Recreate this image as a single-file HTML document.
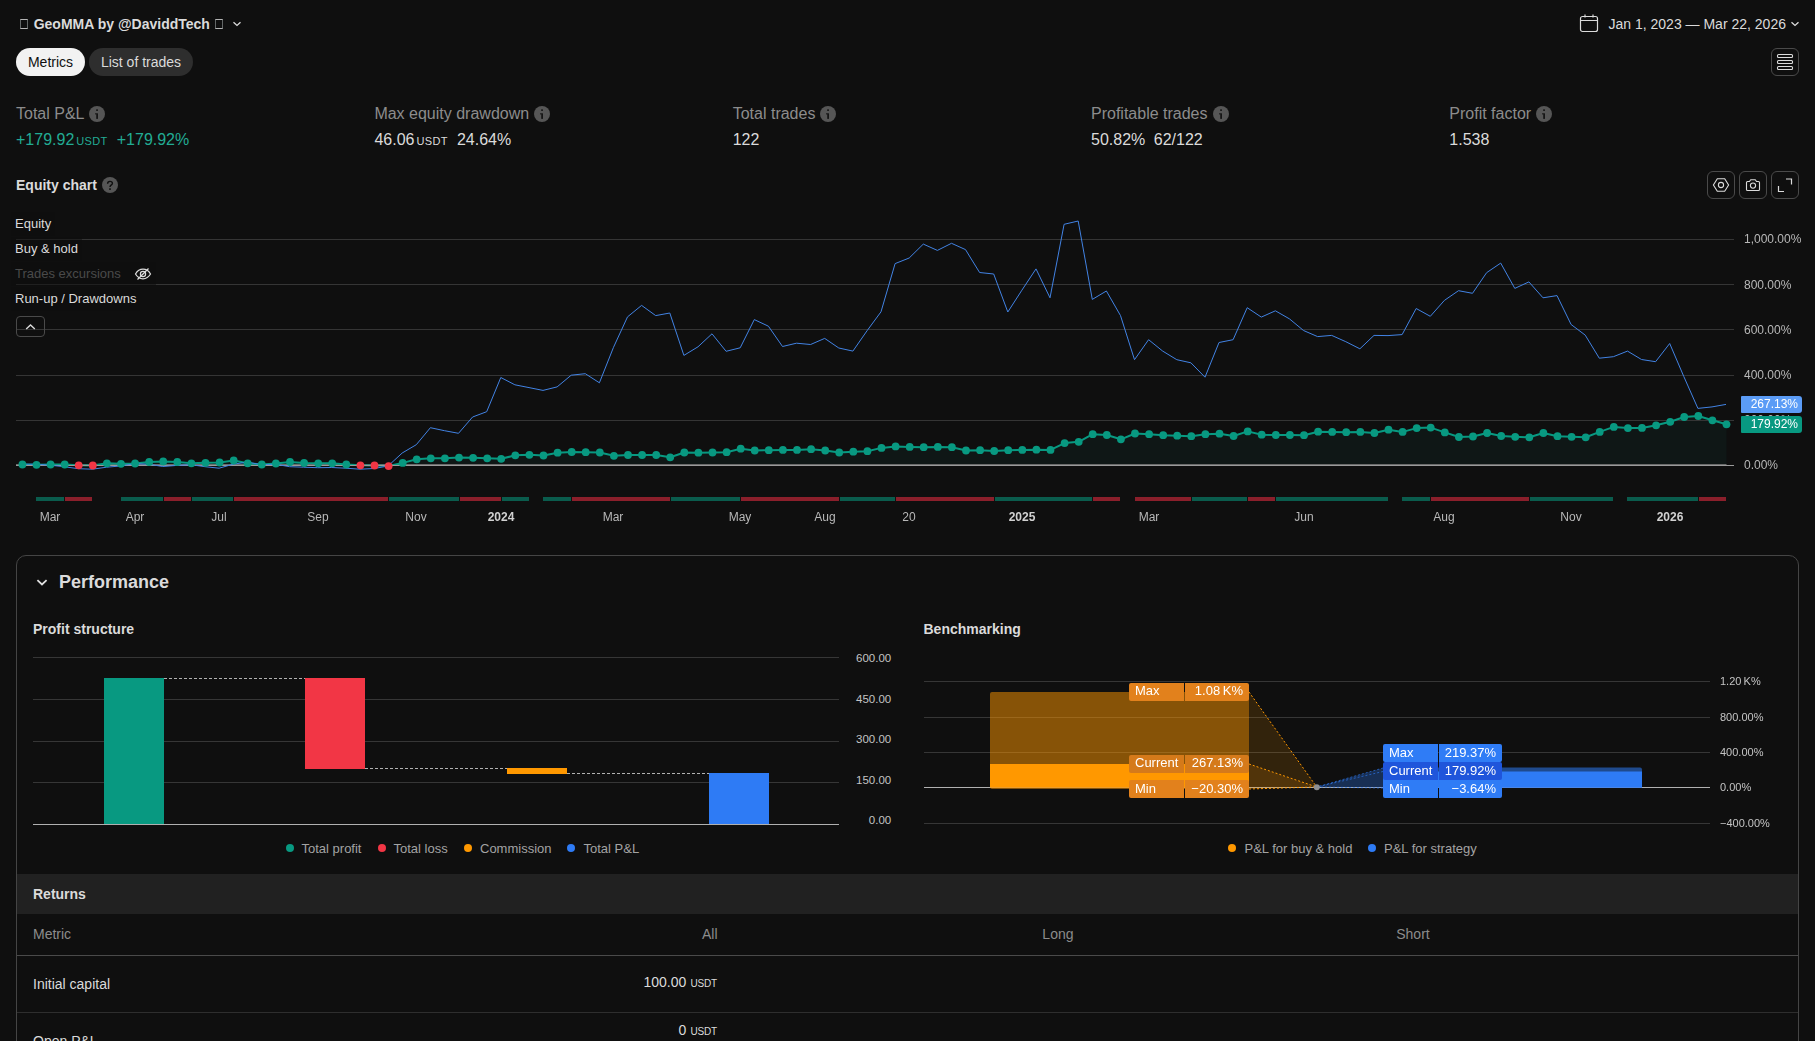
<!DOCTYPE html>
<html><head><meta charset="utf-8"><title>Strategy report</title>
<style>
*{box-sizing:border-box;margin:0;padding:0}
html,body{width:1815px;height:1041px;overflow:hidden;background:#0f0f0f;color:#dbdbdb;font-family:"Liberation Sans",sans-serif;}
.a{position:absolute;white-space:nowrap;line-height:1}
.g{color:#8c8c8c}
.ib{position:absolute;border:1px solid #4a4a4a;border-radius:6px;width:28px;height:28px}
.ib svg{position:absolute;left:0;top:0}
.info{position:absolute;width:16px;height:16px;border-radius:50%;background:#4a4a4a}
.m16{font-size:16px}
.u{font-size:11px;letter-spacing:.35px}
.lg{position:absolute;left:11px;height:24px;padding:0 4px;font-size:13px;line-height:24px;background:rgba(15,15,15,.55);white-space:nowrap}
.ax{will-change:transform;position:absolute;font-size:12px;line-height:1;color:#b8b8b8;white-space:nowrap}
.tl{will-change:transform;position:absolute;font-size:12px;line-height:1;color:#b8b8b8;white-space:nowrap;transform:translateX(-50%);top:511px}
.tl b{color:#d1d1d1}
.dot{position:absolute;width:8px;height:8px;border-radius:50%}
.lt{position:absolute;font-size:13px;line-height:1;color:#a3a3a3;white-space:nowrap}
.bl{will-change:transform;position:absolute;height:18px;font-size:13px;line-height:16px;color:#fff;white-space:nowrap}
</style></head><body>

<div class="a" style="left:20px;top:17px;font-size:14px;font-weight:bold"><span style="display:inline-block;width:8px;height:10px;border:1px solid;border-color:#b4b4b4 #626666;margin-right:5.7px;vertical-align:0"></span>GeoMMA by @DaviddTech<span style="display:inline-block;width:8px;height:10px;border:1px solid;border-color:#b4b4b4 #626666;margin-left:5px;vertical-align:0"></span></div>
<svg class="a" style="left:231px;top:18px" width="12" height="12" viewBox="0 0 12 12"><path d="M2.5 4.2 6 7.4 9.5 4.2" fill="none" stroke="#dbdbdb" stroke-width="1.3"/></svg>
<div class="a" style="left:16px;top:48px;width:69px;height:28px;border-radius:14px;background:#f2f2f2;color:#0f0f0f;font-size:14px;line-height:28px;text-align:center">Metrics</div>
<div class="a" style="left:89px;top:48px;width:104px;height:28px;border-radius:14px;background:#2e2e2e;color:#dbdbdb;font-size:14px;line-height:28px;text-align:center">List of trades</div>
<svg class="a" style="left:1578px;top:12px" width="22" height="22" viewBox="0 0 22 22"><rect x="2.5" y="4.5" width="17" height="15" rx="2" fill="none" stroke="#dbdbdb" stroke-width="1.2"/><path d="M2.5 8.5h17M7 2.5v3M15 2.5v3" stroke="#dbdbdb" stroke-width="1.2" fill="none"/></svg>
<div class="a" style="left:1608.5px;top:17px;font-size:14px">Jan 1, 2023 — Mar 22, 2026</div>
<svg class="a" style="left:1789px;top:18px" width="12" height="12" viewBox="0 0 12 12"><path d="M2.5 4.2 6 7.4 9.5 4.2" fill="none" stroke="#dbdbdb" stroke-width="1.3"/></svg>
<div class="ib" style="left:1771px;top:48px"><svg width="26" height="26" viewBox="0 0 26 26"><g fill="none" stroke="#dbdbdb" stroke-width="1.1"><rect x="5.5" y="5.5" width="15" height="3" rx="1"/><rect x="5.5" y="11.5" width="15" height="3" rx="1"/><rect x="5.5" y="17.5" width="15" height="3" rx="1"/></g></svg></div>
<div class="a g m16" style="left:16px;top:106px">Total P&amp;L<svg style="position:absolute;right:-21px;top:0" width="16" height="16" viewBox="0 0 16 16"><circle cx="8" cy="8" r="8" fill="#565656"/><rect x="7.2" y="3.4" width="1.7" height="1.5" fill="#0f0f0f"/><rect x="7.3" y="7.3" width="1.6" height="5.6" fill="#0f0f0f"/><rect x="6.1" y="7.3" width="1.4" height="1.1" fill="#0f0f0f"/></svg></div>
<div class="a g m16" style="left:374.4px;top:106px">Max equity drawdown<svg style="position:absolute;right:-21px;top:0" width="16" height="16" viewBox="0 0 16 16"><circle cx="8" cy="8" r="8" fill="#565656"/><rect x="7.2" y="3.4" width="1.7" height="1.5" fill="#0f0f0f"/><rect x="7.3" y="7.3" width="1.6" height="5.6" fill="#0f0f0f"/><rect x="6.1" y="7.3" width="1.4" height="1.1" fill="#0f0f0f"/></svg></div>
<div class="a g m16" style="left:732.7px;top:106px">Total trades<svg style="position:absolute;right:-21px;top:0" width="16" height="16" viewBox="0 0 16 16"><circle cx="8" cy="8" r="8" fill="#565656"/><rect x="7.2" y="3.4" width="1.7" height="1.5" fill="#0f0f0f"/><rect x="7.3" y="7.3" width="1.6" height="5.6" fill="#0f0f0f"/><rect x="6.1" y="7.3" width="1.4" height="1.1" fill="#0f0f0f"/></svg></div>
<div class="a g m16" style="left:1091px;top:106px">Profitable trades<svg style="position:absolute;right:-21px;top:0" width="16" height="16" viewBox="0 0 16 16"><circle cx="8" cy="8" r="8" fill="#565656"/><rect x="7.2" y="3.4" width="1.7" height="1.5" fill="#0f0f0f"/><rect x="7.3" y="7.3" width="1.6" height="5.6" fill="#0f0f0f"/><rect x="6.1" y="7.3" width="1.4" height="1.1" fill="#0f0f0f"/></svg></div>
<div class="a g m16" style="left:1449.3px;top:106px">Profit factor<svg style="position:absolute;right:-21px;top:0" width="16" height="16" viewBox="0 0 16 16"><circle cx="8" cy="8" r="8" fill="#565656"/><rect x="7.2" y="3.4" width="1.7" height="1.5" fill="#0f0f0f"/><rect x="7.3" y="7.3" width="1.6" height="5.6" fill="#0f0f0f"/><rect x="6.1" y="7.3" width="1.4" height="1.1" fill="#0f0f0f"/></svg></div>
<div class="a m16" style="left:16px;top:132px"><span style="color:#22ab94">+179.92<span class="u" style="margin-left:2px">USDT</span><span style="margin-left:9.1px">+179.92%</span></span></div>
<div class="a m16" style="left:374.4px;top:132px">46.06<span class="u" style="margin-left:2px">USDT</span><span style="margin-left:9.1px">24.64%</span></div>
<div class="a m16" style="left:732.7px;top:132px">122</div>
<div class="a m16" style="left:1091px;top:132px">50.82%<span style="margin-left:8.5px">62/122</span></div>
<div class="a m16" style="left:1449.3px;top:132px">1.538</div>
<div class="a" style="left:16px;top:178px;font-size:14px;font-weight:bold">Equity chart</div>
<svg class="a" style="left:102px;top:177px" width="16" height="16" viewBox="0 0 16 16"><circle cx="8" cy="8" r="8" fill="#565656"/><path d="M5.6 6.7C5.6 5.2 6.6 4.4 8 4.4s2.4.8 2.4 2C10.4 7.8 8 8.1 8 10.1" fill="none" stroke="#0f0f0f" stroke-width="1.4"/><rect x="7.15" y="11.3" width="1.7" height="1.6" fill="#0f0f0f"/></svg>
<div class="ib" style="left:1707px;top:171px"><svg width="26" height="26" viewBox="0 0 26 26"><g fill="none" stroke="#dbdbdb" stroke-width="1.1"><path d="M9.3 6.7h7.4l3.9 6.3-3.9 6.3H9.3L5.4 13z"/><circle cx="13" cy="13" r="2.6"/></g></svg></div>
<div class="ib" style="left:1739px;top:171px"><svg width="26" height="26" viewBox="0 0 26 26"><g fill="none" stroke="#dbdbdb" stroke-width="1.1"><path d="M7.5 9.5h2l1.2-1.7h4.6l1.2 1.7h2a1 1 0 0 1 1 1v7a1 1 0 0 1-1 1h-11a1 1 0 0 1-1-1v-7a1 1 0 0 1 1-1z" stroke-linejoin="round"/><circle cx="13" cy="13.6" r="2.6"/></g></svg></div>
<div class="ib" style="left:1771px;top:171px"><svg width="26" height="26" viewBox="0 0 26 26"><g fill="none" stroke="#dbdbdb" stroke-width="1.2"><path d="M14 7h5.5v5.5M6.5 14v5.5H12"/></g></svg></div>
<svg class="a" style="left:0;top:200px" width="1815" height="345" viewBox="0 200 1815 345">
<polygon points="22.4,465.0 22.4,464.5 36.5,464.8 50.6,464.5 64.7,464.5 78.7,465.3 92.8,465.5 106.9,463.3 121.0,463.8 135.1,463.5 149.2,462.0 163.2,461.5 177.3,462.0 191.4,463.3 205.5,462.8 219.6,462.5 233.7,460.5 247.7,463.3 261.8,464.5 275.9,463.5 290.0,462.0 304.1,463.0 318.2,463.3 332.2,463.3 346.3,464.5 360.4,465.3 374.5,465.5 388.6,466.1 402.7,462.9 416.7,459.3 430.8,458.3 444.9,458.3 459.0,457.6 473.1,457.8 487.2,458.3 501.2,458.8 515.3,455.3 529.4,454.8 543.5,455.5 557.6,452.7 571.7,452.0 585.7,452.2 599.8,452.5 613.9,455.8 628.0,455.0 642.1,455.0 656.2,455.0 670.2,457.3 684.3,452.5 698.4,452.7 712.5,452.5 726.6,452.2 740.7,448.7 754.7,450.5 768.8,450.2 782.9,449.9 797.0,449.9 811.1,449.2 825.2,450.5 839.2,452.5 853.3,451.7 867.4,451.2 881.5,447.9 895.6,446.4 909.7,446.9 923.7,447.2 937.8,446.9 951.9,447.2 966.0,450.5 980.1,450.2 994.2,451.0 1008.2,450.2 1022.3,449.9 1036.4,449.7 1050.5,449.9 1064.6,443.1 1078.7,441.8 1092.7,434.2 1106.8,435.0 1120.9,439.3 1135.0,433.5 1149.1,434.2 1163.2,435.2 1177.2,435.7 1191.3,436.2 1205.4,434.2 1219.5,433.7 1233.6,436.0 1247.7,431.4 1261.7,434.7 1275.8,435.0 1289.9,435.0 1304.0,435.2 1318.1,431.7 1332.2,431.9 1346.2,432.2 1360.3,431.9 1374.4,433.0 1388.5,429.7 1402.6,431.9 1416.7,428.1 1430.7,427.6 1444.8,432.4 1458.9,437.0 1473.0,436.5 1487.1,433.0 1501.2,436.0 1515.2,436.8 1529.3,437.3 1543.4,433.0 1557.5,436.2 1571.6,436.8 1585.7,437.3 1599.7,431.9 1613.8,426.9 1627.9,428.1 1642.0,427.9 1656.1,425.3 1670.2,421.8 1684.2,417.0 1698.3,416.0 1712.4,420.3 1726.5,424.3 1726.5,465.0" fill="#0f1716"/>
<rect x="16" y="239.0" width="1718" height="1" fill="#353535"/>
<rect x="16" y="284.0" width="1718" height="1" fill="#353535"/>
<rect x="16" y="329.0" width="1718" height="1" fill="#353535"/>
<rect x="16" y="375.0" width="1718" height="1" fill="#353535"/>
<rect x="16" y="420.0" width="1718" height="1" fill="#353535"/>
<rect x="16" y="464" width="1710.5" height="1" fill="#6a6a6a"/>
<polyline points="22.4,464.5 36.5,464.8 50.6,464.5 64.7,464.5 78.7,465.3 92.8,465.5 106.9,463.3 121.0,463.8 135.1,463.5 149.2,462.0 163.2,461.5 177.3,462.0 191.4,463.3 205.5,462.8 219.6,462.5 233.7,460.5 247.7,463.3 261.8,464.5 275.9,463.5 290.0,462.0 304.1,463.0 318.2,463.3 332.2,463.3 346.3,464.5 360.4,465.3 374.5,465.5 388.6,466.1 402.7,462.9 416.7,459.3 430.8,458.3 444.9,458.3 459.0,457.6 473.1,457.8 487.2,458.3 501.2,458.8 515.3,455.3 529.4,454.8 543.5,455.5 557.6,452.7 571.7,452.0 585.7,452.2 599.8,452.5 613.9,455.8 628.0,455.0 642.1,455.0 656.2,455.0 670.2,457.3 684.3,452.5 698.4,452.7 712.5,452.5 726.6,452.2 740.7,448.7 754.7,450.5 768.8,450.2 782.9,449.9 797.0,449.9 811.1,449.2 825.2,450.5 839.2,452.5 853.3,451.7 867.4,451.2 881.5,447.9 895.6,446.4 909.7,446.9 923.7,447.2 937.8,446.9 951.9,447.2 966.0,450.5 980.1,450.2 994.2,451.0 1008.2,450.2 1022.3,449.9 1036.4,449.7 1050.5,449.9 1064.6,443.1 1078.7,441.8 1092.7,434.2 1106.8,435.0 1120.9,439.3 1135.0,433.5 1149.1,434.2 1163.2,435.2 1177.2,435.7 1191.3,436.2 1205.4,434.2 1219.5,433.7 1233.6,436.0 1247.7,431.4 1261.7,434.7 1275.8,435.0 1289.9,435.0 1304.0,435.2 1318.1,431.7 1332.2,431.9 1346.2,432.2 1360.3,431.9 1374.4,433.0 1388.5,429.7 1402.6,431.9 1416.7,428.1 1430.7,427.6 1444.8,432.4 1458.9,437.0 1473.0,436.5 1487.1,433.0 1501.2,436.0 1515.2,436.8 1529.3,437.3 1543.4,433.0 1557.5,436.2 1571.6,436.8 1585.7,437.3 1599.7,431.9 1613.8,426.9 1627.9,428.1 1642.0,427.9 1656.1,425.3 1670.2,421.8 1684.2,417.0 1698.3,416.0 1712.4,420.3 1726.5,424.3" fill="none" stroke="#089981" stroke-width="2" stroke-linejoin="round"/>
<rect x="16" y="465" width="1718" height="1" fill="#9a9a9a"/>
<polyline points="21.9,464.2 36.0,464.2 50.1,465.2 64.2,466.7 78.3,468.7 92.4,469.2 106.5,467.2 120.5,466.0 134.6,463.7 148.7,464.2 162.8,466.5 176.9,465.4 191.0,464.7 205.0,466.7 219.1,468.2 233.2,464.2 247.3,462.1 261.4,464.7 275.5,464.2 289.5,466.7 303.6,467.2 317.7,467.7 331.8,467.5 345.9,468.2 360.0,469.2 374.0,468.5 388.1,466.0 402.2,453.0 416.3,444.7 430.4,427.7 444.5,430.7 458.5,433.3 472.6,417.0 486.7,411.7 500.8,377.5 514.9,384.8 529.0,387.6 543.0,390.4 557.1,386.9 571.2,375.2 585.3,373.7 599.4,382.8 613.5,347.3 627.5,316.9 641.6,305.4 655.7,315.6 669.8,313.0 683.9,355.4 698.0,346.8 712.0,333.8 726.1,351.3 740.2,347.8 754.3,319.6 768.4,326.2 782.5,346.5 796.5,343.2 810.6,344.5 824.7,338.4 838.8,348.0 852.9,351.1 867.0,330.8 881.0,311.8 895.1,263.6 909.2,258.0 923.3,244.1 937.4,250.4 951.5,243.3 965.5,249.6 979.6,272.5 993.7,274.0 1007.8,312.0 1021.9,290.2 1036.0,268.9 1050.0,297.8 1064.1,224.3 1078.2,221.0 1092.3,299.4 1106.4,291.0 1120.5,315.6 1134.5,359.7 1148.6,339.7 1162.7,351.1 1176.8,359.7 1190.9,362.8 1205.0,377.2 1219.0,342.5 1233.1,339.7 1247.2,307.7 1261.3,317.1 1275.4,310.8 1289.5,318.9 1303.5,330.5 1317.6,336.6 1331.7,335.4 1345.8,341.7 1359.9,348.8 1374.0,335.4 1388.0,335.6 1402.1,334.6 1416.2,308.5 1430.3,316.3 1444.4,300.4 1458.5,290.7 1472.5,293.3 1486.6,272.7 1500.7,263.1 1514.8,288.4 1528.9,281.9 1543.0,297.8 1557.0,295.6 1571.1,324.5 1585.2,335.1 1599.3,358.2 1613.4,356.7 1627.5,351.1 1641.5,359.5 1655.6,361.7 1669.7,343.5 1683.8,376.5 1697.9,408.4 1712.0,406.9 1726.0,404.4" fill="none" stroke="#4283e4" stroke-width="1" stroke-linejoin="round"/>
<circle cx="22.4" cy="464.5" r="3.9" fill="#089981"/>
<circle cx="36.5" cy="464.8" r="3.9" fill="#089981"/>
<circle cx="50.6" cy="464.5" r="3.9" fill="#089981"/>
<circle cx="64.7" cy="464.5" r="3.9" fill="#089981"/>
<circle cx="78.7" cy="465.3" r="3.9" fill="#f23645"/>
<circle cx="92.8" cy="465.5" r="3.9" fill="#f23645"/>
<circle cx="106.9" cy="463.3" r="3.9" fill="#089981"/>
<circle cx="121.0" cy="463.8" r="3.9" fill="#089981"/>
<circle cx="135.1" cy="463.5" r="3.9" fill="#089981"/>
<circle cx="149.2" cy="462.0" r="3.9" fill="#089981"/>
<circle cx="163.2" cy="461.5" r="3.9" fill="#089981"/>
<circle cx="177.3" cy="462.0" r="3.9" fill="#089981"/>
<circle cx="191.4" cy="463.3" r="3.9" fill="#089981"/>
<circle cx="205.5" cy="462.8" r="3.9" fill="#089981"/>
<circle cx="219.6" cy="462.5" r="3.9" fill="#089981"/>
<circle cx="233.7" cy="460.5" r="3.9" fill="#089981"/>
<circle cx="247.7" cy="463.3" r="3.9" fill="#089981"/>
<circle cx="261.8" cy="464.5" r="3.9" fill="#089981"/>
<circle cx="275.9" cy="463.5" r="3.9" fill="#089981"/>
<circle cx="290.0" cy="462.0" r="3.9" fill="#089981"/>
<circle cx="304.1" cy="463.0" r="3.9" fill="#089981"/>
<circle cx="318.2" cy="463.3" r="3.9" fill="#089981"/>
<circle cx="332.2" cy="463.3" r="3.9" fill="#089981"/>
<circle cx="346.3" cy="464.5" r="3.9" fill="#089981"/>
<circle cx="360.4" cy="465.3" r="3.9" fill="#f23645"/>
<circle cx="374.5" cy="465.5" r="3.9" fill="#f23645"/>
<circle cx="388.6" cy="466.1" r="3.9" fill="#f23645"/>
<circle cx="402.7" cy="462.9" r="3.9" fill="#089981"/>
<circle cx="416.7" cy="459.3" r="3.9" fill="#089981"/>
<circle cx="430.8" cy="458.3" r="3.9" fill="#089981"/>
<circle cx="444.9" cy="458.3" r="3.9" fill="#089981"/>
<circle cx="459.0" cy="457.6" r="3.9" fill="#089981"/>
<circle cx="473.1" cy="457.8" r="3.9" fill="#089981"/>
<circle cx="487.2" cy="458.3" r="3.9" fill="#089981"/>
<circle cx="501.2" cy="458.8" r="3.9" fill="#089981"/>
<circle cx="515.3" cy="455.3" r="3.9" fill="#089981"/>
<circle cx="529.4" cy="454.8" r="3.9" fill="#089981"/>
<circle cx="543.5" cy="455.5" r="3.9" fill="#089981"/>
<circle cx="557.6" cy="452.7" r="3.9" fill="#089981"/>
<circle cx="571.7" cy="452.0" r="3.9" fill="#089981"/>
<circle cx="585.7" cy="452.2" r="3.9" fill="#089981"/>
<circle cx="599.8" cy="452.5" r="3.9" fill="#089981"/>
<circle cx="613.9" cy="455.8" r="3.9" fill="#089981"/>
<circle cx="628.0" cy="455.0" r="3.9" fill="#089981"/>
<circle cx="642.1" cy="455.0" r="3.9" fill="#089981"/>
<circle cx="656.2" cy="455.0" r="3.9" fill="#089981"/>
<circle cx="670.2" cy="457.3" r="3.9" fill="#089981"/>
<circle cx="684.3" cy="452.5" r="3.9" fill="#089981"/>
<circle cx="698.4" cy="452.7" r="3.9" fill="#089981"/>
<circle cx="712.5" cy="452.5" r="3.9" fill="#089981"/>
<circle cx="726.6" cy="452.2" r="3.9" fill="#089981"/>
<circle cx="740.7" cy="448.7" r="3.9" fill="#089981"/>
<circle cx="754.7" cy="450.5" r="3.9" fill="#089981"/>
<circle cx="768.8" cy="450.2" r="3.9" fill="#089981"/>
<circle cx="782.9" cy="449.9" r="3.9" fill="#089981"/>
<circle cx="797.0" cy="449.9" r="3.9" fill="#089981"/>
<circle cx="811.1" cy="449.2" r="3.9" fill="#089981"/>
<circle cx="825.2" cy="450.5" r="3.9" fill="#089981"/>
<circle cx="839.2" cy="452.5" r="3.9" fill="#089981"/>
<circle cx="853.3" cy="451.7" r="3.9" fill="#089981"/>
<circle cx="867.4" cy="451.2" r="3.9" fill="#089981"/>
<circle cx="881.5" cy="447.9" r="3.9" fill="#089981"/>
<circle cx="895.6" cy="446.4" r="3.9" fill="#089981"/>
<circle cx="909.7" cy="446.9" r="3.9" fill="#089981"/>
<circle cx="923.7" cy="447.2" r="3.9" fill="#089981"/>
<circle cx="937.8" cy="446.9" r="3.9" fill="#089981"/>
<circle cx="951.9" cy="447.2" r="3.9" fill="#089981"/>
<circle cx="966.0" cy="450.5" r="3.9" fill="#089981"/>
<circle cx="980.1" cy="450.2" r="3.9" fill="#089981"/>
<circle cx="994.2" cy="451.0" r="3.9" fill="#089981"/>
<circle cx="1008.2" cy="450.2" r="3.9" fill="#089981"/>
<circle cx="1022.3" cy="449.9" r="3.9" fill="#089981"/>
<circle cx="1036.4" cy="449.7" r="3.9" fill="#089981"/>
<circle cx="1050.5" cy="449.9" r="3.9" fill="#089981"/>
<circle cx="1064.6" cy="443.1" r="3.9" fill="#089981"/>
<circle cx="1078.7" cy="441.8" r="3.9" fill="#089981"/>
<circle cx="1092.7" cy="434.2" r="3.9" fill="#089981"/>
<circle cx="1106.8" cy="435.0" r="3.9" fill="#089981"/>
<circle cx="1120.9" cy="439.3" r="3.9" fill="#089981"/>
<circle cx="1135.0" cy="433.5" r="3.9" fill="#089981"/>
<circle cx="1149.1" cy="434.2" r="3.9" fill="#089981"/>
<circle cx="1163.2" cy="435.2" r="3.9" fill="#089981"/>
<circle cx="1177.2" cy="435.7" r="3.9" fill="#089981"/>
<circle cx="1191.3" cy="436.2" r="3.9" fill="#089981"/>
<circle cx="1205.4" cy="434.2" r="3.9" fill="#089981"/>
<circle cx="1219.5" cy="433.7" r="3.9" fill="#089981"/>
<circle cx="1233.6" cy="436.0" r="3.9" fill="#089981"/>
<circle cx="1247.7" cy="431.4" r="3.9" fill="#089981"/>
<circle cx="1261.7" cy="434.7" r="3.9" fill="#089981"/>
<circle cx="1275.8" cy="435.0" r="3.9" fill="#089981"/>
<circle cx="1289.9" cy="435.0" r="3.9" fill="#089981"/>
<circle cx="1304.0" cy="435.2" r="3.9" fill="#089981"/>
<circle cx="1318.1" cy="431.7" r="3.9" fill="#089981"/>
<circle cx="1332.2" cy="431.9" r="3.9" fill="#089981"/>
<circle cx="1346.2" cy="432.2" r="3.9" fill="#089981"/>
<circle cx="1360.3" cy="431.9" r="3.9" fill="#089981"/>
<circle cx="1374.4" cy="433.0" r="3.9" fill="#089981"/>
<circle cx="1388.5" cy="429.7" r="3.9" fill="#089981"/>
<circle cx="1402.6" cy="431.9" r="3.9" fill="#089981"/>
<circle cx="1416.7" cy="428.1" r="3.9" fill="#089981"/>
<circle cx="1430.7" cy="427.6" r="3.9" fill="#089981"/>
<circle cx="1444.8" cy="432.4" r="3.9" fill="#089981"/>
<circle cx="1458.9" cy="437.0" r="3.9" fill="#089981"/>
<circle cx="1473.0" cy="436.5" r="3.9" fill="#089981"/>
<circle cx="1487.1" cy="433.0" r="3.9" fill="#089981"/>
<circle cx="1501.2" cy="436.0" r="3.9" fill="#089981"/>
<circle cx="1515.2" cy="436.8" r="3.9" fill="#089981"/>
<circle cx="1529.3" cy="437.3" r="3.9" fill="#089981"/>
<circle cx="1543.4" cy="433.0" r="3.9" fill="#089981"/>
<circle cx="1557.5" cy="436.2" r="3.9" fill="#089981"/>
<circle cx="1571.6" cy="436.8" r="3.9" fill="#089981"/>
<circle cx="1585.7" cy="437.3" r="3.9" fill="#089981"/>
<circle cx="1599.7" cy="431.9" r="3.9" fill="#089981"/>
<circle cx="1613.8" cy="426.9" r="3.9" fill="#089981"/>
<circle cx="1627.9" cy="428.1" r="3.9" fill="#089981"/>
<circle cx="1642.0" cy="427.9" r="3.9" fill="#089981"/>
<circle cx="1656.1" cy="425.3" r="3.9" fill="#089981"/>
<circle cx="1670.2" cy="421.8" r="3.9" fill="#089981"/>
<circle cx="1684.2" cy="417.0" r="3.9" fill="#089981"/>
<circle cx="1698.3" cy="416.0" r="3.9" fill="#089981"/>
<circle cx="1712.4" cy="420.3" r="3.9" fill="#089981"/>
<circle cx="1726.5" cy="424.3" r="3.9" fill="#089981"/>
<rect x="36" y="497" width="28" height="4" fill="#0a5c4d"/>
<rect x="65" y="497" width="27" height="4" fill="#8b1f2b"/>
<rect x="121" y="497" width="42" height="4" fill="#0a5c4d"/>
<rect x="164" y="497" width="27" height="4" fill="#8b1f2b"/>
<rect x="192" y="497" width="41" height="4" fill="#0a5c4d"/>
<rect x="234" y="497" width="154" height="4" fill="#8b1f2b"/>
<rect x="389" y="497" width="70" height="4" fill="#0a5c4d"/>
<rect x="460" y="497" width="41" height="4" fill="#8b1f2b"/>
<rect x="502" y="497" width="27" height="4" fill="#0a5c4d"/>
<rect x="543" y="497" width="28" height="4" fill="#0a5c4d"/>
<rect x="572" y="497" width="98" height="4" fill="#8b1f2b"/>
<rect x="671" y="497" width="69" height="4" fill="#0a5c4d"/>
<rect x="741" y="497" width="98" height="4" fill="#8b1f2b"/>
<rect x="840" y="497" width="55" height="4" fill="#0a5c4d"/>
<rect x="896" y="497" width="98" height="4" fill="#8b1f2b"/>
<rect x="995" y="497" width="97" height="4" fill="#0a5c4d"/>
<rect x="1093" y="497" width="27" height="4" fill="#8b1f2b"/>
<rect x="1135" y="497" width="56" height="4" fill="#8b1f2b"/>
<rect x="1192" y="497" width="55" height="4" fill="#0a5c4d"/>
<rect x="1248" y="497" width="27" height="4" fill="#8b1f2b"/>
<rect x="1276" y="497" width="112" height="4" fill="#0a5c4d"/>
<rect x="1402" y="497" width="28" height="4" fill="#0a5c4d"/>
<rect x="1431" y="497" width="98" height="4" fill="#8b1f2b"/>
<rect x="1530" y="497" width="83" height="4" fill="#0a5c4d"/>
<rect x="1627" y="497" width="71" height="4" fill="#0a5c4d"/>
<rect x="1699" y="497" width="27" height="4" fill="#8b1f2b"/>
</svg>
<div class="ax" style="left:1744px;top:233px">1,000.00%</div>
<div class="ax" style="left:1744px;top:279px">800.00%</div>
<div class="ax" style="left:1744px;top:324px">600.00%</div>
<div class="ax" style="left:1744px;top:369px">400.00%</div>
<div class="ax" style="left:1744px;top:414px">200.00%</div>
<div class="ax" style="left:1744px;top:459px">0.00%</div>
<div class="a" style="will-change:transform;left:1741px;top:396px;width:61px;height:17px;border-radius:1px 3px 3px 1px;background:#5b9cf6;color:#fff;font-size:12px;line-height:17px;text-align:right;padding-right:4px">267.13%</div>
<div class="a" style="will-change:transform;left:1741px;top:416px;width:61px;height:17px;border-radius:1px 3px 3px 1px;background:#089981;color:#fff;font-size:12px;line-height:17px;text-align:right;padding-right:4px">179.92%</div>
<div class="tl" style="left:50.1px">Mar</div>
<div class="tl" style="left:134.6px">Apr</div>
<div class="tl" style="left:219.1px">Jul</div>
<div class="tl" style="left:317.7px">Sep</div>
<div class="tl" style="left:416.2px">Nov</div>
<div class="tl" style="left:500.7px"><b>2024</b></div>
<div class="tl" style="left:613.4px">Mar</div>
<div class="tl" style="left:740.2px">May</div>
<div class="tl" style="left:824.7px">Aug</div>
<div class="tl" style="left:909.2px">20</div>
<div class="tl" style="left:1021.8px"><b>2025</b></div>
<div class="tl" style="left:1148.6px">Mar</div>
<div class="tl" style="left:1303.5px">Jun</div>
<div class="tl" style="left:1444.3px">Aug</div>
<div class="tl" style="left:1571.1px">Nov</div>
<div class="tl" style="left:1669.7px"><b>2026</b></div>
<div class="lg" style="top:212px">Equity</div>
<div class="lg" style="top:237px">Buy &amp; hold</div>
<div class="lg" style="top:262px;color:#4a4a4a;width:145px">Trades excursions<svg style="position:absolute;left:123px;top:4px" width="18" height="16" viewBox="0 0 18 16"><g fill="none" stroke="#dbdbdb" stroke-width="1.25"><path d="M1.5 8C3.5 4.6 6 3.2 9 3.2S14.5 4.6 16.5 8C14.5 11.4 12 12.8 9 12.8S3.5 11.4 1.5 8z"/><circle cx="9" cy="8" r="2.6"/><path d="M3.5 13.5 14.5 2.5"/></g></svg></div>
<div class="lg" style="top:287px">Run-up / Drawdowns</div>
<div class="a" style="left:16px;top:316px;width:29px;height:21px;border:1px solid #4a4a4a;border-radius:4px"><svg width="27" height="19" viewBox="0 0 27 19"><path d="M9.2 11.9 13.5 8l4.3 3.9" fill="none" stroke="#dbdbdb" stroke-width="1.4"/></svg></div>
<div class="a" style="left:16px;top:555px;width:1783px;height:520px;border:1px solid #454545;border-radius:10px"></div>
<svg class="a" style="left:34px;top:575px" width="16" height="14" viewBox="34 575 16 14"><path d="M37.4 580.2 42 584.5 46.6 580.2" fill="none" stroke="#e0e0e0" stroke-width="1.8"/></svg>
<div class="a" style="left:59px;top:573px;font-size:18px;font-weight:bold">Performance</div>
<div class="a" style="left:33px;top:622px;font-size:14px;font-weight:bold">Profit structure</div>
<div class="a" style="left:923.5px;top:622px;font-size:14px;font-weight:bold">Benchmarking</div>
<svg class="a" style="left:0;top:640px" width="910" height="200" viewBox="0 640 910 200">
<rect x="33" y="657" width="806" height="1" fill="#363636"/>
<rect x="33" y="699" width="806" height="1" fill="#363636"/>
<rect x="33" y="741" width="806" height="1" fill="#363636"/>
<rect x="33" y="782" width="806" height="1" fill="#363636"/>
<rect x="104" y="678" width="60" height="146" fill="#089981"/>
<rect x="305" y="678" width="60" height="91" fill="#f23645"/>
<rect x="507" y="768" width="60" height="6" fill="#ff9800"/>
<rect x="709" y="773" width="60" height="51" fill="#2e7bf5"/>
<g stroke="#b2b2b2" stroke-width="1" stroke-dasharray="3 2"><path d="M164 678.5H305M365 768.5H507M567 773.5H709"/></g>
<rect x="33" y="824" width="806" height="1" fill="#b0b0b0"/>
</svg>
<div class="ax" style="will-change:auto;font-size:11.5px;right:923.8px;top:653.2px;color:#c4c4c4">600.00</div>
<div class="ax" style="will-change:auto;font-size:11.5px;right:923.8px;top:694.2px;color:#c4c4c4">450.00</div>
<div class="ax" style="will-change:auto;font-size:11.5px;right:923.8px;top:734.2px;color:#c4c4c4">300.00</div>
<div class="ax" style="will-change:auto;font-size:11.5px;right:923.8px;top:775.2px;color:#c4c4c4">150.00</div>
<div class="ax" style="will-change:auto;font-size:11.5px;right:923.8px;top:815.2px;color:#c4c4c4">0.00</div>
<div class="dot" style="left:286px;top:844.4px;background:#089981"></div><div class="lt" style="left:301.5px;top:842px">Total profit</div>
<div class="dot" style="left:377.9px;top:844.4px;background:#f23645"></div><div class="lt" style="left:393.5px;top:842px">Total loss</div>
<div class="dot" style="left:463.9px;top:844.4px;background:#ff9800"></div><div class="lt" style="left:480px;top:842px">Commission</div>
<div class="dot" style="left:567px;top:844.4px;background:#2e7bf5"></div><div class="lt" style="left:583.5px;top:842px">Total P&amp;L</div>
<svg class="a" style="left:910px;top:640px" width="905" height="200" viewBox="910 640 905 200">
<rect x="924" y="681" width="786" height="1" fill="#363636"/>
<rect x="924" y="717" width="786" height="1" fill="#363636"/>
<rect x="924" y="752" width="786" height="1" fill="#363636"/>
<rect x="924" y="823" width="786" height="1" fill="#363636"/>
<rect x="924" y="787" width="786" height="1" fill="#b0b0b0"/>
<polygon points="1249,692 1316.7,787 1249,764" fill="#ff9800" fill-opacity="0.15"/>
<polygon points="1249,764 1316.7,787 1249,789" fill="#ff9800" fill-opacity="0.28"/>
<path d="M992 692h257v97H992a2 2 0 0 1-2-2v-93a2 2 0 0 1 2-2z" fill="#ff9800" fill-opacity="0.5"/>
<rect x="990" y="764" width="259" height="23.5" fill="#ff9800"/>
<g stroke="#ff9800" stroke-width="1" stroke-dasharray="2 2" fill="none"><path d="M1249 692 1316.7 787M1249 764 1316.7 787M1249 789 1316.7 787"/></g>
<polygon points="1383,768 1316.7,787 1383,788" fill="#2e7bf5" fill-opacity="0.3"/>
<path d="M1383 767.5h257a2 2 0 0 1 2 2v18.5H1383z" fill="#2e7bf5" fill-opacity="0.55"/>
<rect x="1383" y="771.5" width="259" height="16" fill="#2e7bf5"/>
<g stroke="#2e7bf5" stroke-opacity="0.65" stroke-width="1" stroke-dasharray="2 2" fill="none"><path d="M1383 768 1316.7 787M1383 771.5 1316.7 787M1383 788 1316.7 787"/></g>
<circle cx="1316.8" cy="787.2" r="3" fill="#909090"/>
</svg>
<div class="bl" style="line-height:16px;left:1129px;top:683px;width:55px;background:#e2811c;padding-left:6px;border-radius:2px 0 0 2px">Max</div>
<div class="bl" style="line-height:16px;left:1185px;top:683px;width:64px;background:#e2811c;text-align:right;padding-right:6px;border-radius:0 2px 2px 0">1.08&#8201;K%</div>
<div class="bl" style="line-height:16px;left:1129px;top:755px;width:55px;background:#d57a1a;padding-left:6px;border-radius:2px 0 0 2px">Current</div>
<div class="bl" style="line-height:16px;left:1185px;top:755px;width:64px;background:#d57a1a;text-align:right;padding-right:6px;border-radius:0 2px 2px 0">267.13%</div>
<div class="bl" style="line-height:18px;left:1129px;top:780px;width:55px;background:#e2811c;padding-left:6px;border-radius:2px 0 0 2px">Min</div>
<div class="bl" style="line-height:18px;left:1185px;top:780px;width:64px;background:#e2811c;text-align:right;padding-right:6px;border-radius:0 2px 2px 0">−20.30%</div>
<div class="bl" style="line-height:18px;left:1383px;top:744px;width:55px;background:#2f7cf6;padding-left:6px;border-radius:2px 0 0 2px">Max</div>
<div class="bl" style="line-height:18px;left:1439px;top:744px;width:63px;background:#2f7cf6;text-align:right;padding-right:6px;border-radius:0 2px 2px 0">219.37%</div>
<div class="bl" style="line-height:18px;left:1383px;top:762px;width:55px;background:#1f55db;padding-left:6px;border-radius:2px 0 0 2px">Current</div>
<div class="bl" style="line-height:18px;left:1439px;top:762px;width:63px;background:#1f55db;text-align:right;padding-right:6px;border-radius:0 2px 2px 0">179.92%</div>
<div class="bl" style="line-height:18px;left:1383px;top:780px;width:55px;background:#2f7cf6;padding-left:6px;border-radius:2px 0 0 2px">Min</div>
<div class="bl" style="line-height:18px;left:1439px;top:780px;width:63px;background:#2f7cf6;text-align:right;padding-right:6px;border-radius:0 2px 2px 0">−3.64%</div>
<div class="ax" style="left:1720px;top:675.5px;color:#c4c4c4;font-size:11px">1.20&#8201;K%</div>
<div class="ax" style="left:1720px;top:711.5px;color:#c4c4c4;font-size:11px">800.00%</div>
<div class="ax" style="left:1720px;top:746.5px;color:#c4c4c4;font-size:11px">400.00%</div>
<div class="ax" style="left:1720px;top:781.5px;color:#c4c4c4;font-size:11px">0.00%</div>
<div class="ax" style="left:1720px;top:817.5px;color:#c4c4c4;font-size:11px">−400.00%</div>
<div class="dot" style="left:1228px;top:844.4px;background:#ff9800"></div><div class="lt" style="left:1244.5px;top:842px">P&amp;L for buy &amp; hold</div>
<div class="dot" style="left:1367.9px;top:844.4px;background:#2e7bf5"></div><div class="lt" style="left:1384px;top:842px">P&amp;L for strategy</div>
<div class="a" style="left:17px;top:874px;width:1781px;height:40px;background:#212121"></div>
<div class="a" style="left:33px;top:887px;font-size:14px;font-weight:bold">Returns</div>
<div class="a g" style="left:33px;top:927px;font-size:14px;color:#8c8c8c">Metric</div>
<div class="a g" style="right:1097.5px;top:927px;font-size:14px;color:#8c8c8c">All</div>
<div class="a g" style="right:741.5px;top:927px;font-size:14px;color:#8c8c8c">Long</div>
<div class="a g" style="right:385.29999999999995px;top:927px;font-size:14px;color:#8c8c8c">Short</div>
<div class="a" style="left:17px;top:955px;width:1781px;height:1px;background:#4a4a4a"></div>
<div class="a" style="left:33px;top:977px;font-size:14px">Initial capital</div>
<div class="a" style="right:1098px;top:975px;font-size:14px">100.00<span style="font-size:10px;letter-spacing:-.15px;margin-left:4.1px">USDT</span></div>
<div class="a" style="left:17px;top:1012px;width:1781px;height:1px;background:#2e2e2e"></div>
<div class="a" style="left:33px;top:1034px;font-size:14px">Open P&amp;L</div>
<div class="a" style="right:1098px;top:1023px;font-size:14px">0<span style="font-size:10px;letter-spacing:-.15px;margin-left:4.1px">USDT</span></div>
</body></html>
